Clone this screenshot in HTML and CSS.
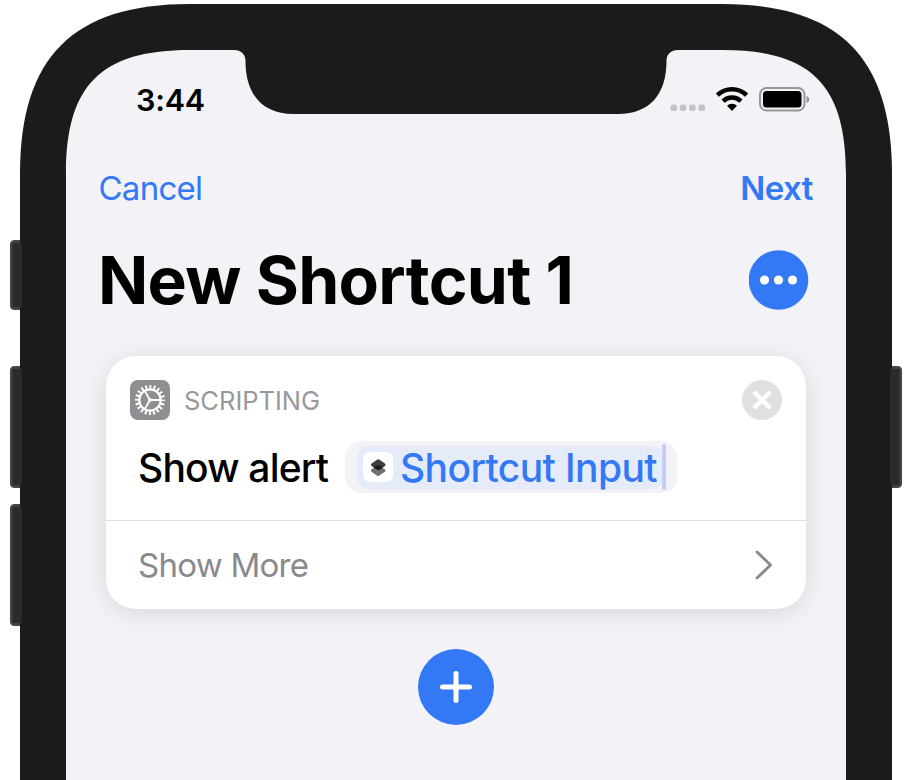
FILE: index.html
```html
<!DOCTYPE html>
<html lang="en">
<head>
<meta charset="utf-8">
<title>New Shortcut</title>
<link rel="stylesheet" href="styles.css">
</head>
<body>
<div class="device">
  <svg class="frame" width="912" height="780" viewBox="0 0 912 780" aria-hidden="true">
    <g class="keys">
      <path d="M23 240.500H14a3.500 3.500 0 0 0-3.500 3.500v62a3.500 3.500 0 0 0 3.500 3.500h9zM23 366.500H14a3.500 3.500 0 0 0-3.500 3.500v114a3.500 3.500 0 0 0 3.500 3.500h9zM23 504.500H14a3.500 3.500 0 0 0-3.500 3.500v114a3.500 3.500 0 0 0 3.500 3.500h9zM889 366.500h9a3.500 3.500 0 0 1 3.500 3.500v114a3.500 3.500 0 0 1-3.500 3.500h-9z"/>
    </g>
    <path class="shell" d="M20 780V174C20 57 73 4 190 4H722C839 4 892 57 892 174V780z"/>
    <path class="glass" d="M66 780V174C66 85 101 50 190 50H234C241 50 245.500 54 245.500 61C245.500 94 262 114 294 114H618C650 114 666.500 94 666.500 61C666.500 54 671 50 678 50H722C811 50 846 85 846 174V780z"/>
    <path class="key-face" d="M12.500 243h9.500v64h-9.500zM12.500 369h9.500v116h-9.500zM12.500 507h9.500v116h-9.500zM890 369h9.500v116H890z"/>
  </svg>
  <main class="screen">
    <header class="status">
      <span class="time">3:44</span>
      <svg class="signals" width="140" height="26" viewBox="670 86 140 26" aria-hidden="true">
        <g fill="#c3c3c7"><rect x="670.500" y="104.500" width="6.500" height="6.500" rx="2"/><rect x="679.800" y="104.500" width="6.500" height="6.500" rx="2"/><rect x="689.100" y="104.500" width="6.500" height="6.500" rx="2"/><rect x="698.500" y="104.500" width="6.500" height="6.500" rx="2"/></g>
        <g fill="none" stroke="#000" stroke-width="4.500"><path d="M717.400 95.200a20.600 20.600 0 0 1 29.200 0"/><path d="M723.100 101.200a12.600 12.600 0 0 1 17.800 0"/></g>
        <path d="M732 111l-5-5.200a7.200 7.200 0 0 1 10 0z"/>
        <rect x="760" y="88" width="44.500" height="22.500" rx="6.500" fill="none" stroke="#98989c" stroke-width="2"/>
        <rect x="763" y="91" width="38.500" height="16.500" rx="3.500"/>
        <path fill="#98989c" d="M806.500 95.700c3.700 1.400 3.700 6 0 7.400z"/>
      </svg>
    </header>
    <nav class="nav"><a class="cancel">Cancel</a><a class="next">Next</a></nav>
    <div class="heading">
      <h1>New Shortcut 1</h1>
      <svg width="60" height="60" viewBox="0 0 60 60" role="img" aria-label="More"><circle cx="29.500" cy="30" r="29.800" fill="#3379f6"/><g fill="#fff"><circle cx="15.500" cy="30" r="4.600"/><circle cx="29.500" cy="30" r="4.600"/><circle cx="43.500" cy="30" r="4.600"/></g></svg>
    </div>
    <section class="card">
      <div class="action">
        <div class="card-head">
          <svg width="40" height="40" viewBox="0 0 40 40" aria-hidden="true">
            <rect width="40" height="40" rx="8" fill="#8e8e93"/>
            <g fill="none" stroke="#fff">
              <circle cx="20" cy="20" r="10.700" stroke-width="2.200"/>
              <circle cx="20" cy="20" r="13" stroke-width="4" stroke-dasharray="1.900 2.184" stroke-dashoffset=".95"/>
              <path d="M20 20H31M20 20L14.500 10.500M20 20L14.500 29.500" stroke-width="1.800"/>
            </g>
            <circle cx="20" cy="20" r="1.800" fill="#fff"/>
          </svg>
          <span class="category">SCRIPTING</span>
          <svg class="close" width="40" height="40" viewBox="0 0 40 40" role="img" aria-label="Remove"><circle cx="20" cy="20" r="20" fill="#e0e0e2"/><path d="M13 13L27 27M27 13L13 27" stroke="#fff" stroke-width="4.300" stroke-linecap="round"/></svg>
        </div>
        <div class="statement">
          <span class="verb">Show alert</span>
          <span class="field"><span class="token">
            <svg width="30" height="30" viewBox="0 0 30 30" aria-hidden="true"><rect width="30" height="30" rx="6.500" fill="#fff"/><path d="M8 18.500q0-1 1-1.500l5-3q1-.600 2 0l5.500 3q1 .500 1 1.500t-1 1.500l-5.200 3.500q-1.300.800-2.600 0L9 20q-1-.500-1-1.500z" fill="#6f6f6f"/><path d="M8 12.700q0-1 1-1.500l5-3.500q1.300-1 2.600 0l5 3.500q1 .500 1 1.500t-1 1.500l-5 3.300q-1.300.800-2.600 0L9 14.200q-1-.500-1-1.500z" fill="#3d3d3d"/><path d="M10.500 15.200l3.500-1.800q1.300-.6 2.600 0l3.500 1.800-3.500 2.300q-1.300.800-2.600 0z" fill="#1b1b1b"/></svg>
            <span class="variable">Shortcut Input</span></span><i class="caret"></i></span>
        </div>
      </div>
      <div class="more"><span>Show More</span><svg width="20" height="32" viewBox="0 0 20 32" aria-hidden="true"><path d="M3 3L16.500 16L3 29" fill="none" stroke="#89898d" stroke-width="2.900" stroke-linecap="round" stroke-linejoin="round"/></svg></div>
    </section>
    <svg class="add" width="76" height="76" viewBox="0 0 76 76" role="img" aria-label="Add action"><circle cx="38" cy="38" r="38" fill="#3379f6"/><path d="M24.500 38h27M38 24.500v27" stroke="#fff" stroke-width="5" stroke-linecap="round"/></svg>
  </main>
</div>
</body>
</html>
```

FILE: styles.css
```css
* { box-sizing: border-box; }
body { margin: 0; background: #fff; font-family: Inter, "Liberation Sans", sans-serif; }
svg { display: block; flex: none; }
.device { position: relative; width: 912px; height: 780px; overflow: hidden; }
.frame { position: absolute; inset: 0; }
.keys { fill: #444; stroke: #484848; }
.key-face { fill: #2b2b2b; }
.shell { fill: #1b1b1b; }
.glass { fill: #f2f2f7; }
.screen { position: relative; width: 780px; margin: 0 66px; padding-top: 80px; display: flex; flex-direction: column; }
.status { display: flex; justify-content: space-between; align-items: center; height: 40px; padding: 0 36px 0 70px; }
.signals { margin-top: -2px; }
.time { margin-top: -2px; font-size: 30.5px; font-weight: 600; letter-spacing: -0.2px; }
.nav { display: flex; justify-content: space-between; align-items: center; height: 40px; margin-top: 48px; padding: 0 33px 0 32.5px; color: #3379f6; font-size: 33px; }
.cancel { letter-spacing: -0.75px; }
.next { font-weight: 600; letter-spacing: -0.5px; }
.heading { display: flex; justify-content: space-between; align-items: center; height: 80px; margin-top: 32px; padding: 0 37px 0 32px; }
h1 { margin: 0; font-size: 66px; line-height: 80px; font-weight: 700; letter-spacing: -0.7px; white-space: nowrap; }
.card { width: 700px; height: 252.6px; margin: 36px 40px 0; border-radius: 30px; background: #fff; box-shadow: 0 4px 24px rgba(0, 0, 0, .11); }
.action { height: 165px; padding: 24px 24px 0; border-bottom: 1px solid #e0e0e2; }
.card-head { display: flex; align-items: center; gap: 14px; height: 40px; }
.category { color: #98989c; font-size: 25.5px; letter-spacing: 0; }
.close { margin-left: auto; }
.statement { display: flex; align-items: center; gap: 16px; height: 52px; margin: 21px 0 0 8px; white-space: nowrap; }
.verb, .variable { padding-top: 2px; font-size: 39px; line-height: 48px; font-weight: 500; letter-spacing: -0.6px; }
.verb { width: 190.5px; letter-spacing: -0.8px; }
.field { display: flex; align-items: center; width: 332.5px; height: 52px; padding-left: 12.5px; border-radius: 16px; background: #f2f2f7; }
.token { display: flex; align-items: center; gap: 7px; width: 306px; height: 43px; padding-left: 6px; border-radius: 11px; background: #e5ebf8; color: #3379f6; }
.caret { width: 4px; height: 46px; margin-left: -1px; border-radius: 2px; background: #c5cef3; }
.more { display: flex; align-items: center; justify-content: space-between; height: 88px; padding: 0 32px; color: #89898d; font-size: 33px; letter-spacing: -0.75px; }
.add { margin: 40.4px auto 0; }
```
